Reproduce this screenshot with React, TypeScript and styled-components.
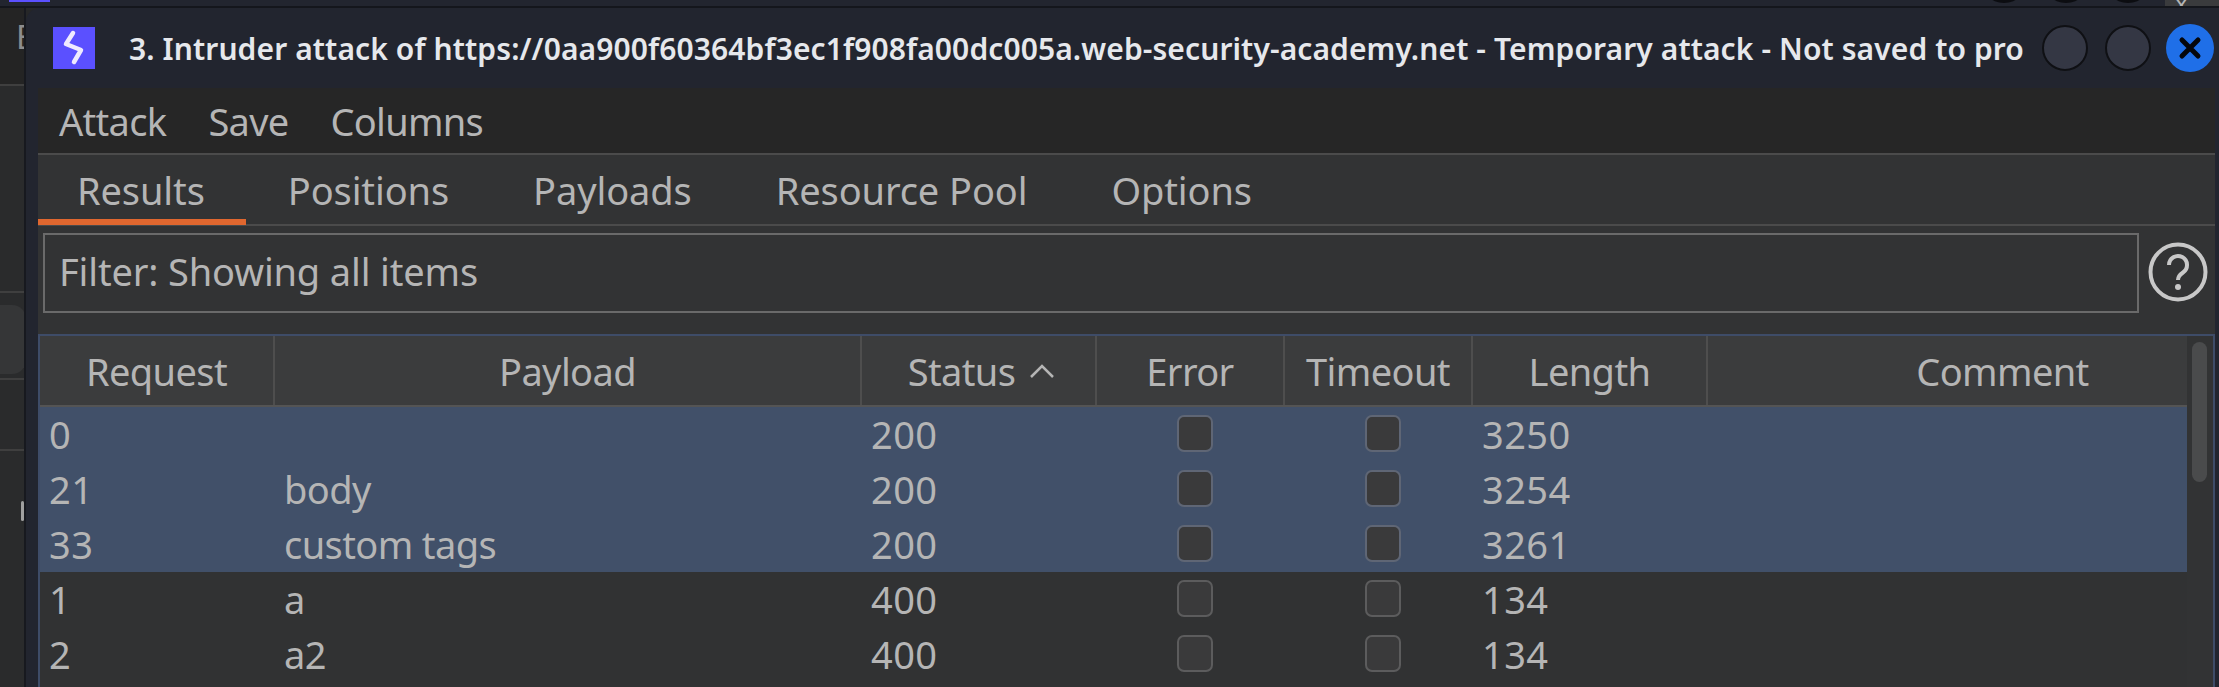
import React from "react";
import styled, { createGlobalStyle } from "styled-components";

const GlobalStyle = createGlobalStyle`
  html, body {
    margin: 0;
    padding: 0;
    height: 687px;
    overflow: hidden;
    background: #262728;
  }
  * { box-sizing: border-box; }
`;

const Page = styled.div`
  width: 2219px;
  height: 687px;
  display: flex;
  flex-direction: column;
  overflow: hidden;
  font-family: "Noto Sans", sans-serif;
  font-size: 38px;
  letter-spacing: -0.6px;
  color: #b5b5b5;
`;

const TopStrip = styled.div`
  height: 8px;
  flex: none;
  display: flex;
  background: #22252f;
  border-bottom: 2px solid #14161c;
  overflow: hidden;
`;

const TopLogo = styled.div`
  width: 41px;
  height: 2px;
  margin-left: 9px;
  background: #5b50ff;
`;

const TopDots = styled.div`
  display: flex;
  gap: 14px;
  margin-left: auto;
  margin-right: 13px;
`;

const TopDot = styled.div`
  width: 48px;
  height: 48px;
  margin-top: -45px;
  border-radius: 50%;
  background: #0c0d11;
`;

const TopCorner = styled.div`
  width: 54px;
  background: #3a3b3d;
  color: #b5b5b5;
  font-size: 24px;
  line-height: 6px;
  padding-left: 10px;
`;

const Body = styled.div`
  flex: 1;
  display: flex;
  min-height: 0;
`;

const Sidebar = styled.div`
  width: 26px;
  flex: none;
  display: flex;
  flex-direction: column;
  background: #2a2b2c;
  border-right: 2px solid #17191f;
  overflow: hidden;
`;

const SideHead = styled.div`
  height: 78px;
  background: #242424;
  border-bottom: 2px solid #3f3f3f;
  padding-left: 16px;
  font-size: 32px;
  line-height: 58px;
  color: #8d8d8d;
  overflow: hidden;
`;

const SideSection = styled.div<{ $height: number }>`
  height: ${(p) => p.$height}px;
  flex: none;
  border-bottom: 2px solid #3f3f3f;
`;

const SidePill = styled.div`
  width: 40px;
  height: 69px;
  margin: 12px 0 0 -14px;
  border-radius: 14px;
  background: #353637;
`;

const SideMark = styled.div`
  width: 3px;
  height: 20px;
  margin: 50px 0 0 21px;
  border-radius: 2px;
  background: #a0a0a0;
`;

const Window = styled.div`
  flex: 1;
  min-width: 0;
  display: flex;
  flex-direction: column;
  padding: 0 4px 0 12px;
  background: #22252f;
  border-top-left-radius: 14px;
`;

const TitleBar = styled.div`
  height: 80px;
  flex: none;
  display: flex;
  align-items: center;
  padding-left: 15px;
`;

const AppIcon = styled.svg`
  flex: none;
`;

const Title = styled.div`
  margin-left: 34px;
  width: 1896px;
  flex: none;
  font-size: 30px;
  font-weight: 600;
  letter-spacing: 0.1px;
  color: #e6e8ec;
  white-space: nowrap;
  overflow: hidden;
`;

const WindowButton = styled.div<{ $close?: boolean }>`
  width: ${(p) => (p.$close ? 48 : 46)}px;
  height: ${(p) => (p.$close ? 48 : 46)}px;
  flex: none;
  margin-left: ${(p) => (p.$close ? 15 : 17)}px;
  display: flex;
  align-items: center;
  justify-content: center;
  border-radius: 50%;
  background: ${(p) => (p.$close ? "#1f6fe8" : "#343744")};
  border: ${(p) => (p.$close ? "none" : "2px solid #0f1014")};
`;

const MenuBar = styled.div`
  height: 67px;
  flex: none;
  display: flex;
  align-items: center;
  gap: 42px;
  padding: 0 0 0 21px;
  background: #262626;
  border-bottom: 2px solid #4b4b4b;
  letter-spacing: -0.7px;
`;

const TabBar = styled.div`
  height: 71px;
  flex: none;
  display: flex;
  background: #323334;
  border-bottom: 2px solid #4b4b4b;
  letter-spacing: -0.1px;
`;

const Tab = styled.div<{ $active?: boolean }>`
  height: 70px;
  padding: 8px ${(p) => (p.$active ? 41 : 42)}px 0 ${(p) => (p.$active ? 39 : 42)}px;
  line-height: 54px;
  border-bottom: 6px solid ${(p) => (p.$active ? "#e0672f" : "transparent")};
`;

const Content = styled.div`
  flex: 1;
  min-height: 0;
  display: flex;
  flex-direction: column;
  background: #323334;
`;

const FilterRow = styled.div`
  height: 108px;
  flex: none;
  display: flex;
  align-items: flex-start;
  padding: 7px 0 0 5px;
`;

const FilterBox = styled.div`
  width: 2096px;
  height: 80px;
  flex: none;
  display: flex;
  align-items: center;
  padding: 0 0 4px 14px;
  border: 2px solid #6a6a6a;
  letter-spacing: -0.15px;
`;

const HelpIcon = styled.svg`
  flex: none;
  margin: 9px 0 0 9px;
`;

const TableFrame = styled.div`
  flex: 1;
  min-height: 0;
  display: flex;
  border: 2px solid #3e4c68;
  border-bottom: none;
  background: #313233;
`;

const Table = styled.div`
  flex: 1;
  min-width: 0;
`;

const columns = "235px 587px 235px 188px 188px 235px 479px";

const HeaderRow = styled.div`
  display: grid;
  grid-template-columns: ${columns};
  height: 71px;
  background: #3b3c3d;
  border-bottom: 2px solid #545454;
`;

const HeaderCell = styled.div<{ $offset?: number }>`
  display: flex;
  align-items: center;
  justify-content: center;
  gap: 14px;
  padding-left: ${(p) => p.$offset ?? 0}px;
  border-right: 2px solid #4e4e4e;
  white-space: nowrap;

  &:last-child {
    border-right: none;
  }
`;

const Row = styled.div<{ $selected?: boolean }>`
  display: grid;
  grid-template-columns: ${columns};
  height: 55px;
  line-height: 55px;
  background: ${(p) => (p.$selected ? "#415069" : "#313233")};
`;

const Cell = styled.div`
  padding-left: 9px;
  white-space: nowrap;
`;

const NumberCell = styled(Cell)`
  letter-spacing: 0.4px;
`;

const CheckCell = styled.div<{ $offset?: number }>`
  display: flex;
  align-items: center;
  justify-content: center;
  padding-left: ${(p) => p.$offset ?? 0}px;
  padding-bottom: 2px;
`;

const CheckBox = styled.div<{ $selected?: boolean }>`
  width: 36px;
  height: 37px;
  border-radius: 7px;
  background: #3a3a3b;
  border: 2px solid ${(p) => (p.$selected ? "#5f6675" : "#5c5c5d")};
`;

const ScrollTrack = styled.div`
  width: 26px;
  flex: none;
  padding: 6px 6px 0 5px;
  background: #323334;
`;

const ScrollThumb = styled.div`
  width: 15px;
  height: 140px;
  border-radius: 8px;
  background: #4a4b4c;
`;

const tabs = ["Results", "Positions", "Payloads", "Resource Pool", "Options"];

const rows = [
  { request: "0", payload: "", status: "200", length: "3250", selected: true },
  { request: "21", payload: "body", status: "200", length: "3254", selected: true },
  { request: "33", payload: "custom tags", status: "200", length: "3261", selected: true },
  { request: "1", payload: "a", status: "400", length: "134", selected: false },
  { request: "2", payload: "a2", status: "400", length: "134", selected: false },
];

const App: React.FC = () => {
  return (
    <Page>
      <GlobalStyle />
      <TopStrip>
        <TopLogo />
        <TopDots>
          <TopDot />
          <TopDot />
          <TopDot />
        </TopDots>
        <TopCorner>x</TopCorner>
      </TopStrip>
      <Body>
        <Sidebar>
          <SideHead>E</SideHead>
          <SideSection $height={207} />
          <SideSection $height={87}>
            <SidePill />
          </SideSection>
          <SideSection $height={71} />
          <SideMark />
        </Sidebar>
        <Window>
          <TitleBar>
            <AppIcon width="42" height="42" viewBox="0 0 42 42">
              <rect width="42" height="42" fill="#5b50ff" />
              <path
                d="M20 6 L13 17 L28 23 L21 35"
                fill="none"
                stroke="#efeaff"
                strokeWidth="4.500"
                strokeLinejoin="round"
                strokeLinecap="round"
              />
            </AppIcon>
            <Title>
              3. Intruder attack of
              https://0aa900f60364bf3ec1f908fa00dc005a.web-security-academy.net
              - Temporary attack - Not saved to pro
            </Title>
            <WindowButton />
            <WindowButton />
            <WindowButton $close>
              <svg width="24" height="24" viewBox="0 0 24 24">
                <path
                  d="M4 4 L20 20 M20 4 L4 20"
                  stroke="#05070c"
                  strokeWidth="5"
                  strokeLinecap="round"
                />
              </svg>
            </WindowButton>
          </TitleBar>
          <MenuBar>
            <span>Attack</span>
            <span>Save</span>
            <span>Columns</span>
          </MenuBar>
          <TabBar>
            {tabs.map((tab, index) => (
              <Tab key={tab} $active={index === 0}>
                {tab}
              </Tab>
            ))}
          </TabBar>
          <Content>
            <FilterRow>
              <FilterBox>Filter: Showing all items</FilterBox>
              <HelpIcon width="60" height="60" viewBox="0 0 60 60">
                <circle cx="30" cy="30" r="27.500" fill="none" stroke="#c8c8c8" strokeWidth="4" />
                <path
                  d="M21 23 a9 9 0 1 1 14 7.500 c-3 2 -5 3.500 -5 7.500"
                  fill="none"
                  stroke="#c8c8c8"
                  strokeWidth="4"
                />
                <circle cx="30" cy="45" r="3" fill="#c8c8c8" />
              </HelpIcon>
            </FilterRow>
            <TableFrame>
              <Table>
                <HeaderRow>
                  <HeaderCell>Request</HeaderCell>
                  <HeaderCell>Payload</HeaderCell>
                  <HeaderCell $offset={6}>
                    Status
                    <svg width="26" height="16" viewBox="0 0 26 16">
                      <path d="M2 14 L13 3 L24 14" fill="none" stroke="#b5b5b5" strokeWidth="2.500" />
                    </svg>
                  </HeaderCell>
                  <HeaderCell>Error</HeaderCell>
                  <HeaderCell>Timeout</HeaderCell>
                  <HeaderCell>Length</HeaderCell>
                  <HeaderCell $offset={110}>Comment</HeaderCell>
                </HeaderRow>
                {rows.map((row) => (
                  <Row key={row.request} $selected={row.selected}>
                    <NumberCell>{row.request}</NumberCell>
                    <Cell>{row.payload}</Cell>
                    <NumberCell>{row.status}</NumberCell>
                    <CheckCell $offset={8}>
                      <CheckBox $selected={row.selected} />
                    </CheckCell>
                    <CheckCell $offset={8}>
                      <CheckBox $selected={row.selected} />
                    </CheckCell>
                    <NumberCell>{row.length}</NumberCell>
                    <Cell />
                  </Row>
                ))}
              </Table>
              <ScrollTrack>
                <ScrollThumb />
              </ScrollTrack>
            </TableFrame>
          </Content>
        </Window>
      </Body>
    </Page>
  );
};

export default App;
